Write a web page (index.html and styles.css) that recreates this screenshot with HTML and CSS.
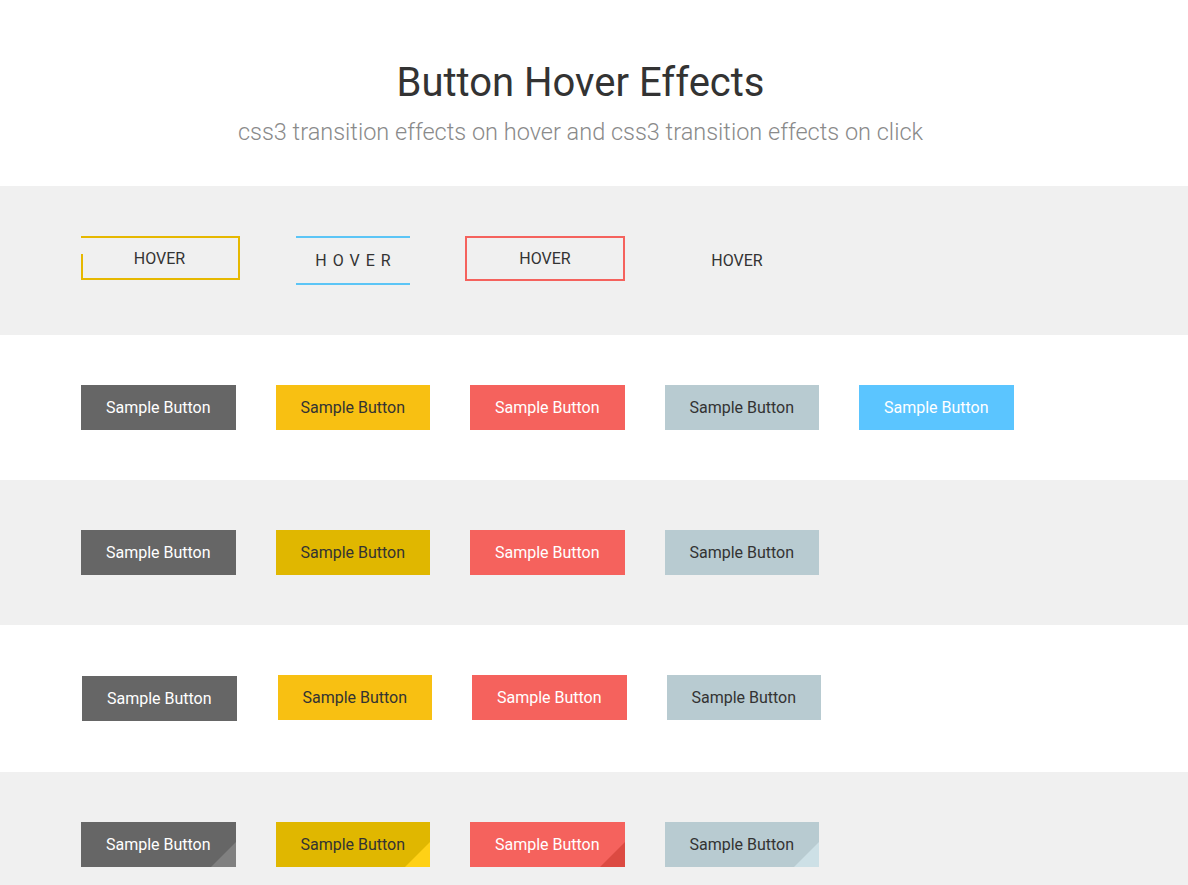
FILE: index.html
```html
<!DOCTYPE html>
<html lang="en">
<head>
    <meta charset="UTF-8">
    <meta name="viewport" content="width=device-width, initial-scale=1.0">
    <title>Button Hover Effects</title>
    <link rel="stylesheet" href="styles.css">
</head>
<body>
    <header class="header">
        <h1>Button Hover Effects</h1>
        <p class="subtitle">css3 transition effects on hover and css3 transition effects on click</p>
    </header>

    <section class="row row-hover">
        <a class="hover-btn hover-yellow" href="#">HOVER</a>
        <a class="hover-btn hover-lines" href="#">HOVER</a>
        <a class="hover-btn hover-red" href="#">HOVER</a>
        <a class="hover-btn hover-plain" href="#">HOVER</a>
    </section>

    <section class="row row-white">
        <a class="btn btn-dark" href="#">Sample Button</a>
        <a class="btn btn-yellow" href="#">Sample Button</a>
        <a class="btn btn-red" href="#">Sample Button</a>
        <a class="btn btn-grey" href="#">Sample Button</a>
        <a class="btn btn-blue" href="#">Sample Button</a>
    </section>

    <section class="row row-gray">
        <a class="btn btn-dark" href="#">Sample Button</a>
        <a class="btn btn-gold" href="#">Sample Button</a>
        <a class="btn btn-red" href="#">Sample Button</a>
        <a class="btn btn-grey" href="#">Sample Button</a>
    </section>

    <section class="row row-white row-3d">
        <a class="btn btn-dark btn-pressed" href="#">Sample Button</a>
        <a class="btn btn-yellow" href="#">Sample Button</a>
        <a class="btn btn-red" href="#">Sample Button</a>
        <a class="btn btn-grey" href="#">Sample Button</a>
    </section>

    <section class="row row-gray row-last">
        <a class="btn btn-dark corner" href="#">Sample Button</a>
        <a class="btn btn-gold corner" href="#">Sample Button</a>
        <a class="btn btn-red corner" href="#">Sample Button</a>
        <a class="btn btn-grey corner" href="#">Sample Button</a>
    </section>
</body>
</html>
```

FILE: styles.css
```css
body {
    font-family: Roboto, "Open Sans", sans-serif;
    margin: 0;
    padding: 0;
    background: #fff;
    color: #333;
}
.header {
    height: 186px;
    box-sizing: border-box;
    padding: 56px 27px 0 0;
    text-align: center;
}
.header h1 {
    margin: 0;
    font-size: 40px;
    font-weight: 400;
    line-height: 54px;
    color: #333;
}
.subtitle {
    margin: 2px 0 0;
    font-size: 23.5px;
    font-weight: 300;
    line-height: 40px;
    color: #8a8a8a;
}
.row {
    display: flex;
    gap: 40px;
    box-sizing: border-box;
    padding: 50px 0 0 81px;
    height: 145px;
}
.row-gray,
.row-hover {
    background: #f0f0f0;
}
.row-white {
    background: #fff;
}
.row-hover {
    height: 149px;
    gap: 0;
}
.row-3d {
    height: 147px;
    padding-left: 83px;
}
.row-last {
    height: 113px;
}

/* first row */
.hover-btn {
    display: flex;
    align-items: center;
    justify-content: center;
    box-sizing: border-box;
    text-decoration: none;
    color: #333;
    font-size: 16px;
}
.hover-yellow {
    position: relative;
    width: 159px;
    height: 44px;
    border: 2px solid #e6b800;
    border-left: none;
}
.hover-yellow::before {
    content: "";
    position: absolute;
    left: 0;
    bottom: -2px;
    width: 2px;
    height: 26px;
    background: #e6b800;
}
.hover-lines {
    width: 114px;
    height: 49px;
    margin-left: 56px;
    border-top: 2px solid #5bc5f6;
    border-bottom: 2px solid #5bc5f6;
    letter-spacing: 6px;
    padding-left: 6px;
}
.hover-red {
    width: 160px;
    height: 45px;
    margin-left: 55px;
    border: 2px solid #f5625d;
}
.hover-plain {
    width: 52px;
    height: 49px;
    margin-left: 86px;
}

/* sample buttons */
.btn {
    display: flex;
    align-items: center;
    justify-content: center;
    width: 154.5px;
    height: 45px;
    font-size: 16px;
    text-decoration: none;
    color: #fff;
    position: relative;
    overflow: hidden;
}
.btn-dark {
    background: #666;
}
.btn-yellow {
    background: #f8c012;
    color: #333;
}
.btn-gold {
    background: #e0b700;
    color: #333;
}
.btn-red {
    background: #f5625d;
}
.btn-grey {
    background: #b8cbd1;
    color: #333;
}
.btn-blue {
    background: #5bc5ff;
}
.btn-pressed {
    transform: translate(-1px, 1px);
}
.corner::after {
    content: "";
    position: absolute;
    right: 0;
    bottom: 0;
    border-style: solid;
    border-width: 0 0 25px 25px;
    border-color: transparent transparent #808080 transparent;
}
.btn-gold.corner::after {
    border-bottom-color: #ffd116;
}
.btn-red.corner::after {
    border-bottom-color: #dc4a42;
}
.btn-grey.corner::after {
    border-bottom-color: #cde0e6;
}
```
